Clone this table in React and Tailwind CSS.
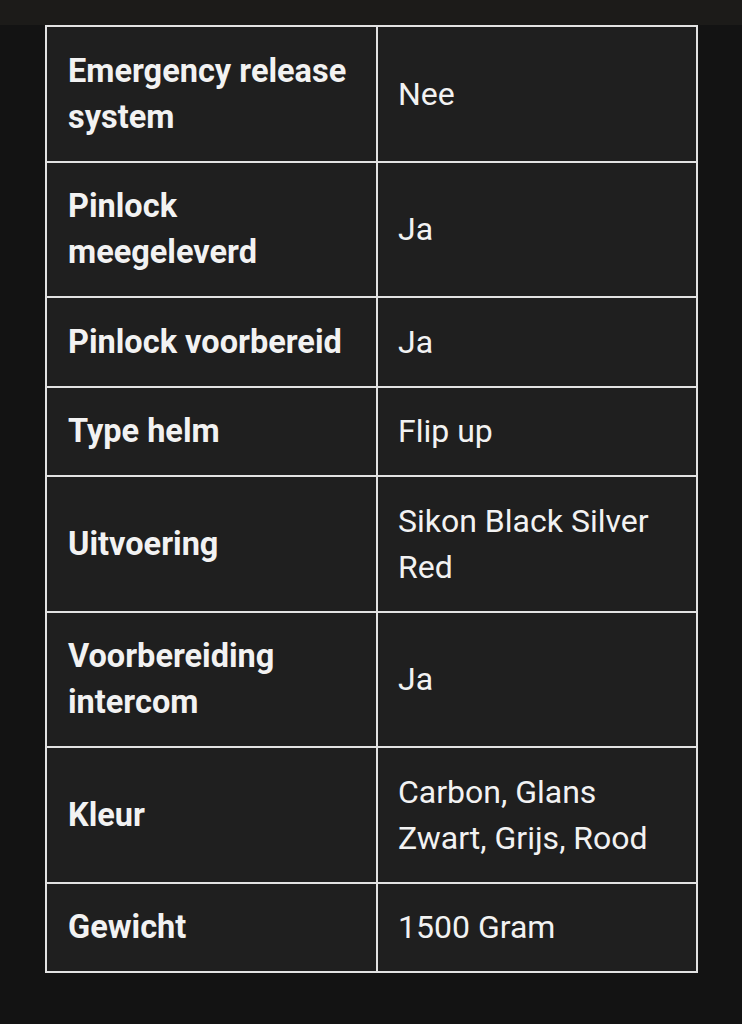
export default function App() {
  const rows = [
    ["Emergency release system", "Nee"],
    ["Pinlock meegeleverd", "Ja"],
    ["Pinlock voorbereid", "Ja"],
    ["Type helm", "Flip up"],
    ["Uitvoering", "Sikon Black Silver Red"],
    ["Voorbereiding intercom", "Ja"],
    ["Kleur", "Carbon, Glans Zwart, Grijs, Rood"],
    ["Gewicht", "1500 Gram"],
  ];
  return (
    <div className="min-h-[1024px] bg-[#131313] text-[#f2f2f2]" style={{ fontFamily: "Roboto, 'Noto Sans', sans-serif" }}>
      <div className="h-[25px] bg-[#1c1b19]" />
      <div className="pl-[45px]">
        <table className="border-collapse w-[651px] table-fixed">
          <colgroup>
            <col className="w-[331px]" />
            <col className="w-[320px]" />
          </colgroup>
          <tbody>
            {rows.map(([k, v]) => (
              <tr key={k}>
                <td className="border-2 border-[#e2e2e2] bg-[#1f1f1f] pl-[21px] pr-[12px] py-[20.75px] align-middle text-[32.5px] leading-[46px] font-bold">
                  {k}
                </td>
                <td className="border-2 border-[#e2e2e2] bg-[#1f1f1f] pl-[20px] pr-[12px] py-[20.75px] align-middle text-[32px] leading-[46px] font-normal">
                  {v}
                </td>
              </tr>
            ))}
          </tbody>
        </table>
      </div>
    </div>
  );
}
